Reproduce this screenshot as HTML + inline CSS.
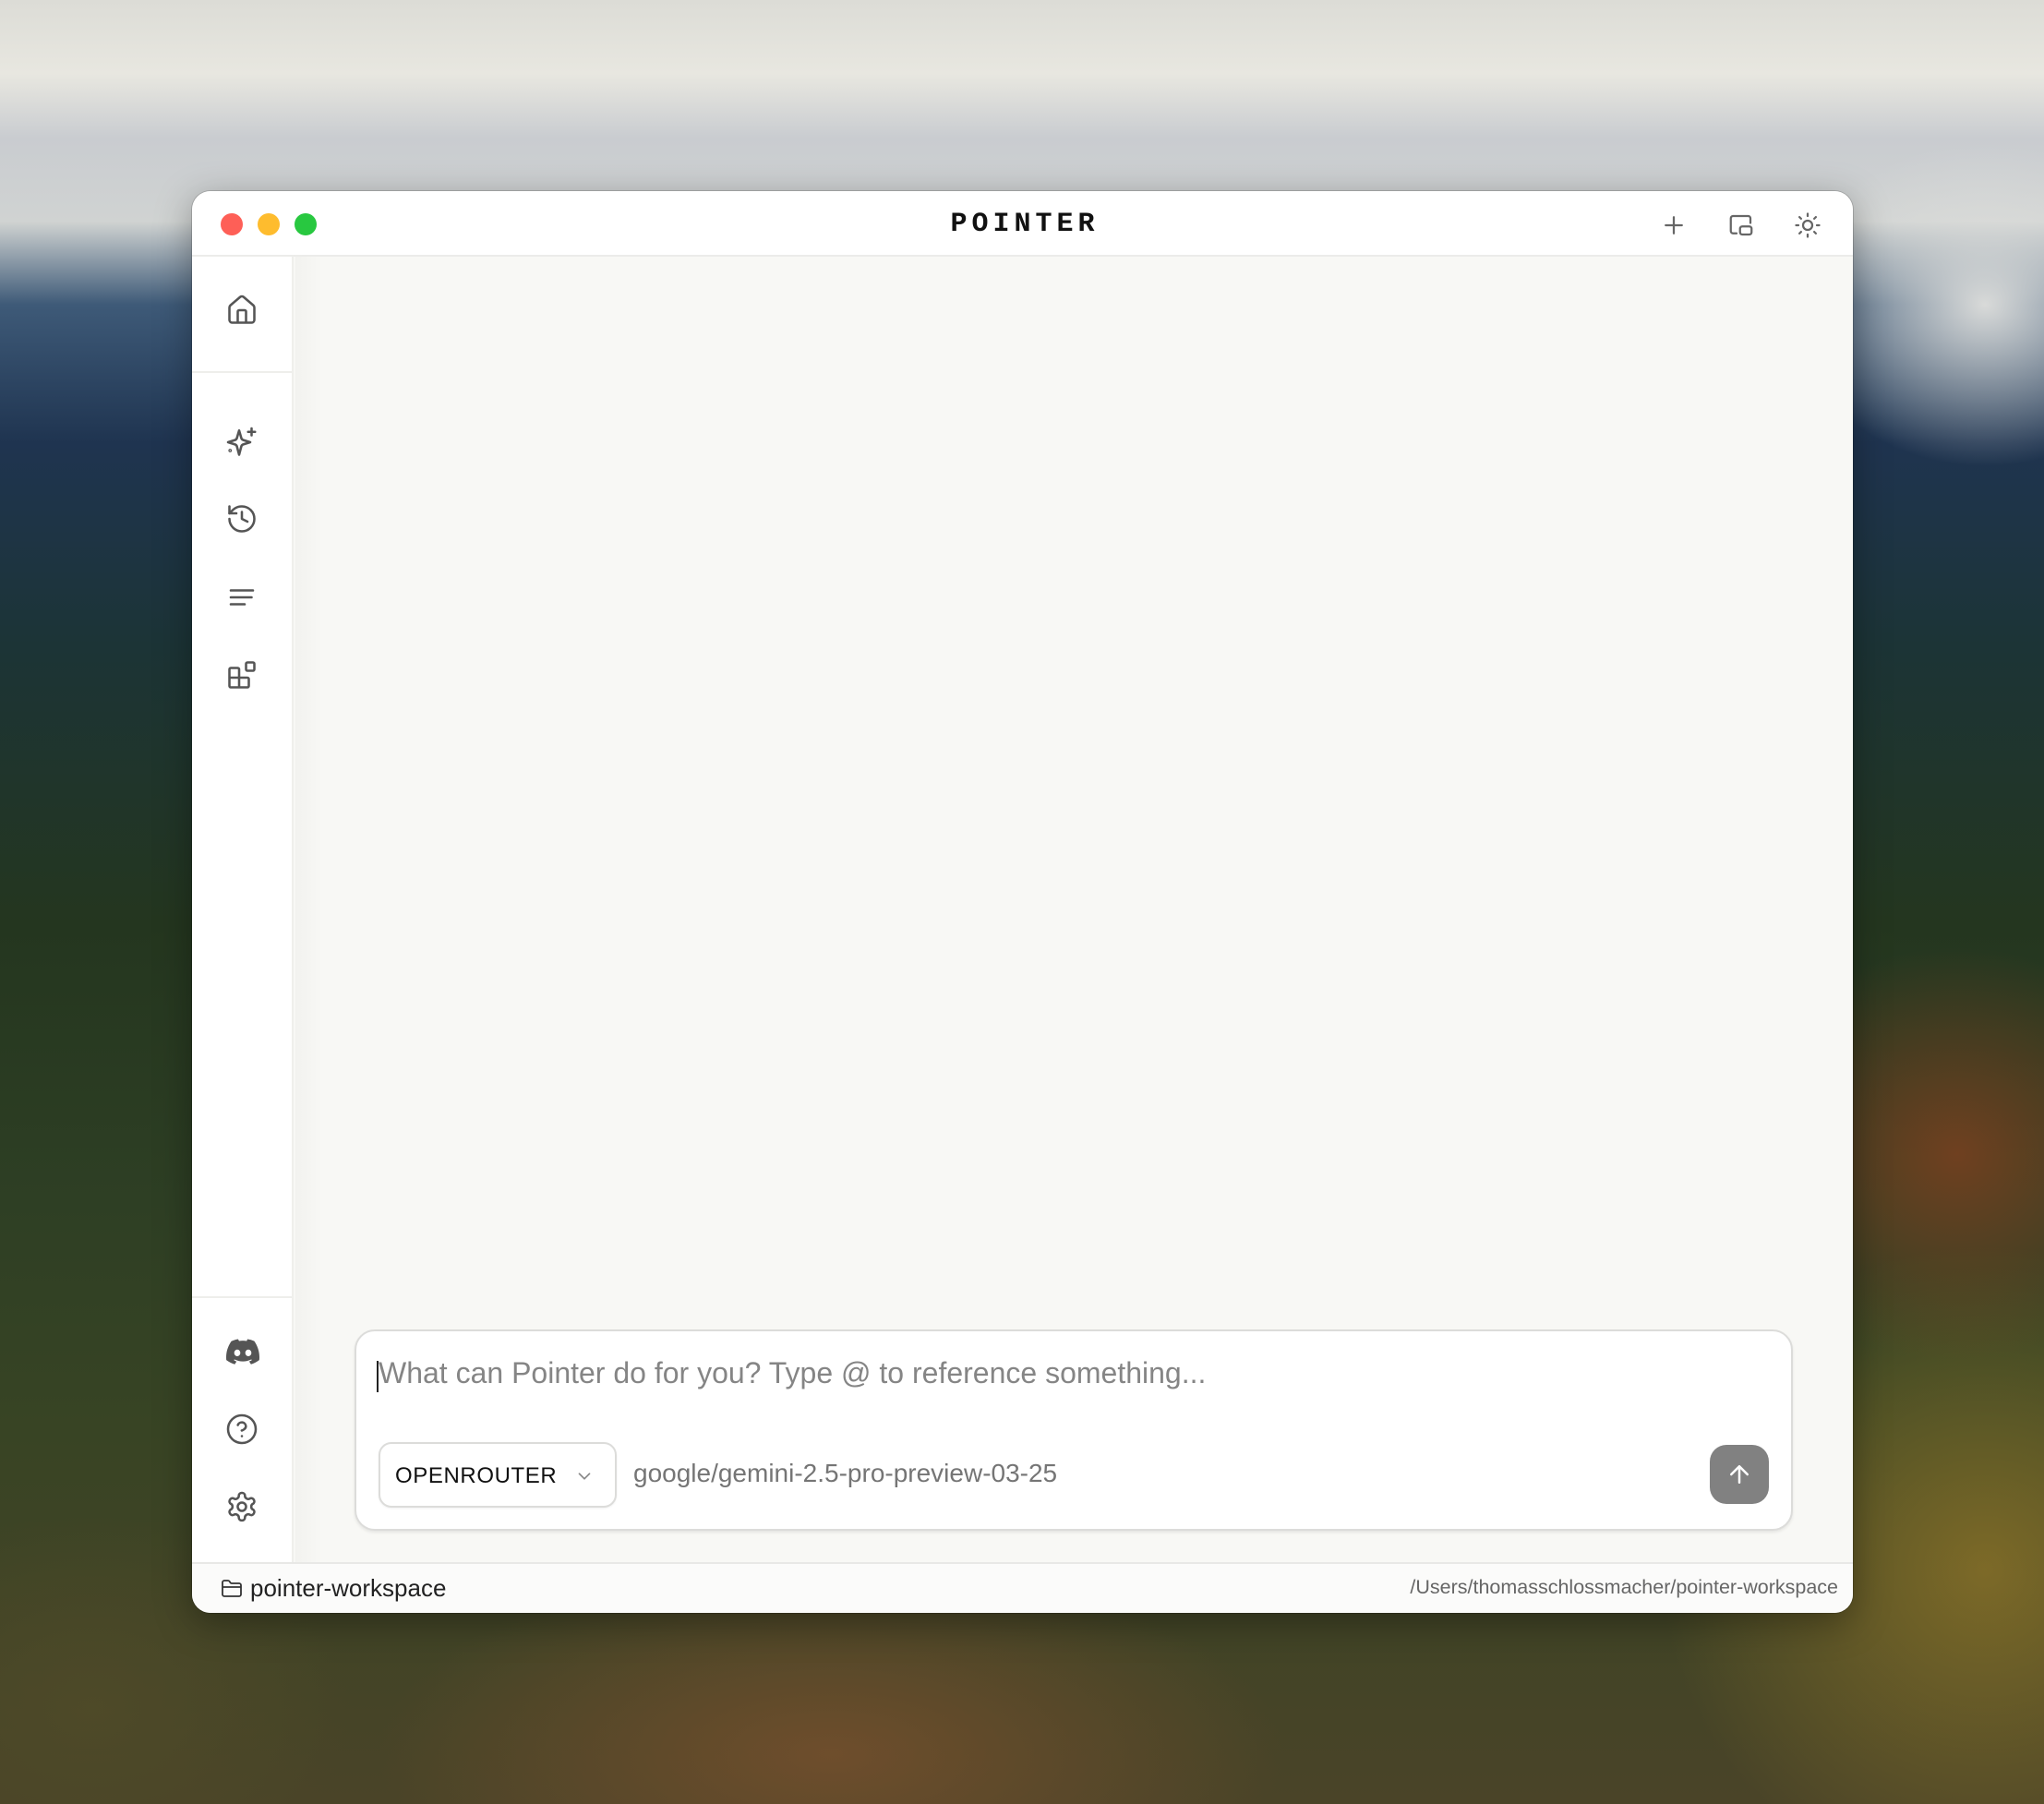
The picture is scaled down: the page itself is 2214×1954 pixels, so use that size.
<!DOCTYPE html>
<html><head><meta charset="utf-8"><style>
*{box-sizing:border-box;margin:0;padding:0}
html,body{width:2214px;height:1954px;overflow:hidden}
body{position:relative;font-family:"Liberation Sans",sans-serif;
background:
radial-gradient(ellipse 300px 250px at 2150px 330px,rgba(225,225,222,.95),rgba(225,225,222,0) 70%),
radial-gradient(ellipse 350px 320px at 2120px 1250px,rgba(140,65,30,.7),rgba(140,65,30,0) 70%),
radial-gradient(ellipse 500px 500px at 2150px 1700px,rgba(140,115,40,.8),rgba(140,115,40,0) 70%),
radial-gradient(ellipse 700px 300px at 900px 1900px,rgba(120,80,45,.8),rgba(120,80,45,0) 70%),
radial-gradient(ellipse 400px 300px at 100px 1850px,rgba(80,75,40,.8),rgba(80,75,40,0) 70%),
linear-gradient(180deg,#dcdcd6 0px,#e8e7e0 80px,#c9ccd0 150px,#d0d3d2 240px,#3e5a78 330px,#1f3450 480px,#1c3436 700px,#24361f 1000px,#2e3f24 1300px,#384424 1550px,#4a4428 1954px);}
.win{position:absolute;left:208px;top:207px;width:1799px;height:1540px;border-radius:20px;background:#f8f8f5;overflow:hidden;box-shadow:0 10px 40px rgba(0,0,0,.35),0 0 0 1px rgba(0,0,0,.15)}
.tb{position:absolute;left:0;top:0;right:0;height:71px;background:#fff;border-bottom:2px solid #ececea}
.tl{position:absolute;top:24px;width:24px;height:24px;border-radius:50%}
.title{position:absolute;left:0;right:0;top:19px;text-align:center;font-family:"Liberation Mono",monospace;font-weight:bold;font-size:30px;letter-spacing:5px;color:#111;padding-left:5px}
.ti{position:absolute;top:22px}
.side{position:absolute;left:0;top:71px;width:110px;bottom:55px;background:#fff;border-right:2px solid #efefec}
.side .sep{position:absolute;left:0;right:0;height:2px;background:#eeeeeb}
.si{position:absolute;left:36px}
.main-shadow{position:absolute;left:112px;top:71px;width:30px;bottom:55px;background:linear-gradient(90deg,rgba(0,0,0,.025),rgba(0,0,0,0))}
.foot{position:absolute;left:0;right:0;bottom:0;height:55px;background:#fbfbfa;border-top:2px solid #e8e8e6}
.input{position:absolute;left:176px;top:1233px;width:1558px;height:218px;background:#fff;border:2px solid #dcdcda;border-radius:22px;box-shadow:0 2px 3px rgba(0,0,0,.08)}
.ph{position:absolute;left:24px;top:27px;font-size:32px;color:#858585;white-space:nowrap}
.caret{position:absolute;left:22px;top:32px;width:2px;height:34px;background:#222}
.pill{position:absolute;left:24px;top:120px;width:258px;height:71px;border:2px solid #dcdcda;border-radius:14px;background:#fff;box-shadow:0 1px 2px rgba(0,0,0,.06)}
.pill span{position:absolute;left:16px;top:21px;font-size:24px;letter-spacing:0.6px;color:#111}
.model{position:absolute;left:300px;top:138px;font-size:28px;color:#757575;white-space:nowrap}
.send{position:absolute;left:1466px;top:123px;width:64px;height:64px;border-radius:18px;background:#818181}
</style></head><body>
<div class="win">
 <div class="tb">
  <div class="tl" style="left:31px;background:#fe5f57;"></div>
  <div class="tl" style="left:71px;background:#febc2e;"></div>
  <div class="tl" style="left:111px;background:#28c840;"></div>
  <div class="title">POINTER</div>
  <svg class="ti" style="left:1590px" width="30" height="30" viewBox="0 0 24 24" fill="none" stroke="#666" stroke-width="1.8" stroke-linecap="round"><path d="M5 12h14M12 5v14"/></svg>
  <svg class="ti" style="left:1662px" width="32" height="30" viewBox="0 0 24 24" fill="none" stroke="#666" stroke-width="1.8" stroke-linecap="round" stroke-linejoin="round"><path d="M8 19H5a2 2 0 0 1-2-2V6a2 2 0 0 1 2-2h13a2 2 0 0 1 2 2v4"/><rect x="11" y="13" width="10" height="7" rx="2"/></svg>
  <svg class="ti" style="left:1735px" width="30" height="30" viewBox="0 0 24 24" fill="none" stroke="#666" stroke-width="1.8" stroke-linecap="round"><circle cx="12" cy="12" r="4"/><path d="M12 2v2M12 20v2M4.9 4.9l1.4 1.4M17.7 17.7l1.4 1.4M2 12h2M20 12h2M6.3 17.7l-1.4 1.4M19.1 4.9l-1.4 1.4"/></svg>
 </div>
 <div class="side">
  <div class="sep" style="top:124px"></div>
  <div class="sep" style="top:1126px"></div>
  <svg class="si" style="top:40px" width="36" height="36" viewBox="0 0 24 24" fill="none" stroke="#555" stroke-width="1.7" stroke-linejoin="round"><path d="M15 21v-8a1 1 0 0 0-1-1h-4a1 1 0 0 0-1 1v8"/><path d="M3 10a2 2 0 0 1 .7-1.5l7-6a2 2 0 0 1 2.6 0l7 6A2 2 0 0 1 21 10v9a2 2 0 0 1-2 2H5a2 2 0 0 1-2-2z"/></svg>
  <svg class="si" style="top:183px" width="36" height="36" viewBox="0 0 24 24" fill="none" stroke="#555" stroke-width="1.7" stroke-linejoin="round" stroke-linecap="round"><path d="M10 3.5 11.6 9a2 2 0 0 0 1.4 1.4l5 1.6-5 1.6a2 2 0 0 0-1.4 1.4L10 21l-1.6-6a2 2 0 0 0-1.4-1.4L2 12l5-1.6A2 2 0 0 0 8.4 9z"/><path d="M19 2v5M16.5 4.5h5"/><circle cx="3.5" cy="18" r=".4"/></svg>
  <svg class="si" style="top:266px" width="36" height="36" viewBox="0 0 24 24" fill="none" stroke="#555" stroke-width="1.7" stroke-linejoin="round" stroke-linecap="round"><path d="M3 12a9 9 0 1 0 9-9 9.75 9.75 0 0 0-6.74 2.74L3 8"/><path d="M3 3v5h5"/><path d="M12 7v5l4 2"/></svg>
  <svg class="si" style="top:351px" width="36" height="36" viewBox="0 0 24 24" fill="none" stroke="#555" stroke-width="1.7" stroke-linecap="round"><path d="M4 7h16M4 12h15M4 17h10"/></svg>
  <svg class="si" style="top:435px" width="36" height="36" viewBox="0 0 24 24" fill="none" stroke="#555" stroke-width="1.7" stroke-linejoin="round"><rect x="15" y="3" width="6" height="6" rx="1"/><path d="M10 21V8a1 1 0 0 0-1-1H4a1 1 0 0 0-1 1v12a1 1 0 0 0 1 1h12a1 1 0 0 0 1-1v-5a1 1 0 0 0-1-1H3"/></svg>
  <svg class="si" style="top:1168px" width="38" height="36" viewBox="0 0 24 24" fill="#555"><path d="M20.3 4.4A19.8 19.8 0 0 0 15.4 3l-.6 1.3a18.3 18.3 0 0 0-5.5 0L8.6 3a19.7 19.7 0 0 0-4.9 1.5C.6 9.1-.3 13.6.1 18.1A19.9 19.9 0 0 0 6.2 21.2l1.3-2.1a13 13 0 0 1-2-1l.5-.4a14.2 14.2 0 0 0 12.1 0l.5.4a12.8 12.8 0 0 1-2 1l1.3 2.1a19.8 19.8 0 0 0 6-3.1c.5-5.2-.9-9.7-3.6-13.7zM8 15.3c-1.2 0-2.2-1.1-2.2-2.4S6.8 10.5 8 10.5s2.200 1.1 2.2 2.4-1 2.4-2.2 2.4zm8 0c-1.2 0-2.2-1.1-2.2-2.4s1-2.4 2.2-2.4 2.2 1.1 2.2 2.4-1 2.4-2.2 2.4z"/></svg>
  <svg class="si" style="top:1252px" width="36" height="36" viewBox="0 0 24 24" fill="none" stroke="#555" stroke-width="1.7" stroke-linecap="round"><circle cx="12" cy="12" r="10"/><path d="M9.1 9a3 3 0 0 1 5.8 1c0 2-3 3-3 3"/><path d="M12 17h.01"/></svg>
  <svg class="si" style="top:1336px" width="36" height="36" viewBox="0 0 24 24" fill="none" stroke="#555" stroke-width="1.7" stroke-linejoin="round"><path d="M12.2 2h-.4a2 2 0 0 0-2 2v.2a2 2 0 0 1-1 1.7l-.4.3a2 2 0 0 1-2 0l-.2-.1a2 2 0 0 0-2.7.7l-.2.4a2 2 0 0 0 .7 2.7l.2.1a2 2 0 0 1 1 1.7v.5a2 2 0 0 1-1 1.7l-.2.1a2 2 0 0 0-.7 2.7l.2.4a2 2 0 0 0 2.7.7l.2-.1a2 2 0 0 1 2 0l.4.3a2 2 0 0 1 1 1.7v.2a2 2 0 0 0 2 2h.4a2 2 0 0 0 2-2v-.2a2 2 0 0 1 1-1.7l.4-.3a2 2 0 0 1 2 0l.2.1a2 2 0 0 0 2.7-.7l.2-.4a2 2 0 0 0-.7-2.7l-.2-.1a2 2 0 0 1-1-1.7v-.5a2 2 0 0 1 1-1.7l.2-.1a2 2 0 0 0 .7-2.7l-.2-.4a2 2 0 0 0-2.7-.7l-.2.1a2 2 0 0 1-2 0l-.4-.3a2 2 0 0 1-1-1.7V4a2 2 0 0 0-2-2z"/><circle cx="12" cy="12" r="3"/></svg>
 </div>
 <div class="main-shadow"></div>
 <div class="input">
  <div class="caret"></div>
  <div class="ph">What can Pointer do for you? Type @ to reference something...</div>
  <div class="pill"><span>OPENROUTER</span>
   <svg style="position:absolute;left:210px;top:24px" width="22" height="22" viewBox="0 0 24 24" fill="none" stroke="#888" stroke-width="1.8" stroke-linecap="round" stroke-linejoin="round"><path d="m6 9 6 6 6-6"/></svg></div>
  <div class="model">google/gemini-2.5-pro-preview-03-25</div>
  <div class="send"><svg style="position:absolute;left:17px;top:17px" width="30" height="30" viewBox="0 0 24 24" fill="none" stroke="#fff" stroke-width="2" stroke-linecap="round" stroke-linejoin="round"><path d="m5 12 7-7 7 7M12 19V5"/></svg></div>
 </div>
 <div class="foot">
  <svg style="position:absolute;left:31px;top:15px" width="24" height="24" viewBox="0 0 24 24" fill="none" stroke="#333" stroke-width="1.8" stroke-linejoin="round"><path d="M4 20h16a2 2 0 0 0 2-2V8a2 2 0 0 0-2-2h-7.9a2 2 0 0 1-1.7-.9l-.8-1.2A2 2 0 0 0 7.9 3H4a2 2 0 0 0-2 2v13a2 2 0 0 0 2 2z"/><path d="M2 10h20"/></svg>
  <div style="position:absolute;left:63px;top:11px;font-size:26px;color:#222">pointer-workspace</div>
  <div style="position:absolute;right:16px;top:13px;font-size:21.5px;color:#666">/Users/thomasschlossmacher/pointer-workspace</div>
 </div>
</div>
</body></html>
